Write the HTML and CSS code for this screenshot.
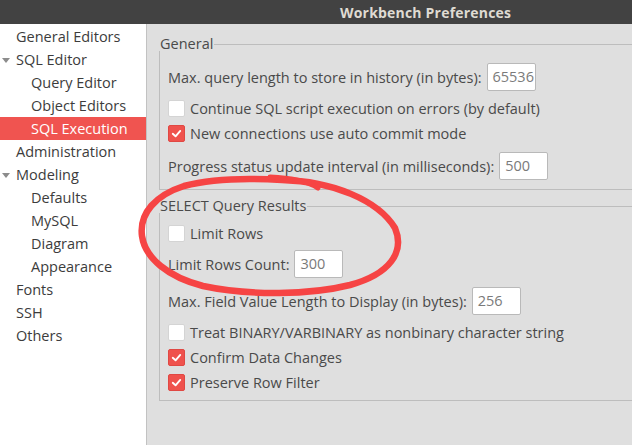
FILE: index.html
```html
<!DOCTYPE html>
<html>
<head>
<meta charset="utf-8">
<link rel="stylesheet" href="styles.css">
</head>
<body>
<div class="window">
  <header class="titlebar"><span class="title">Workbench Preferences</span></header>
  <div class="content">
    <nav class="sidebar">
      <div class="item l0">General Editors</div>
      <div class="item l0"><span class="tri"></span>SQL Editor</div>
      <div class="item l1">Query Editor</div>
      <div class="item l1">Object Editors</div>
      <div class="item l1 selected">SQL Execution</div>
      <div class="item l0">Administration</div>
      <div class="item l0"><span class="tri"></span>Modeling</div>
      <div class="item l1">Defaults</div>
      <div class="item l1">MySQL</div>
      <div class="item l1">Diagram</div>
      <div class="item l1">Appearance</div>
      <div class="item l0">Fonts</div>
      <div class="item l0">SSH</div>
      <div class="item l0">Others</div>
    </nav>
    <main class="panel">
      <section class="group group-general">
        <div class="group-head"><span class="group-label">General</span><span class="group-line"></span></div>
        <div class="group-body">
          <div class="row entry-row"><span>Max. query length to store in history (in bytes):</span><div class="entry">65536</div></div>
          <div class="row check-row"><span class="check"></span><span>Continue SQL script execution on errors (by default)</span></div>
          <div class="row check-row"><span class="check on"><svg viewBox="0 0 16 16"><polyline points="4,8.3 7,11 12,5.3"/></svg></span><span>New connections use auto commit mode</span></div>
          <div class="row entry-row gap-big"><span>Progress status update interval (in milliseconds):</span><div class="entry">500</div></div>
        </div>
      </section>
      <section class="group group-select">
        <div class="group-head"><span class="group-label">SELECT Query Results</span><span class="group-line"></span></div>
        <div class="group-body">
          <div class="row check-row"><span class="check"></span><span>Limit Rows</span></div>
          <div class="row entry-row"><span>Limit Rows Count:</span><div class="entry">300</div></div>
          <div class="row entry-row"><span>Max. Field Value Length to Display (in bytes):</span><div class="entry">256</div></div>
          <div class="row check-row"><span class="check"></span><span>Treat BINARY/VARBINARY as nonbinary character string</span></div>
          <div class="row check-row"><span class="check on"><svg viewBox="0 0 16 16"><polyline points="4,8.3 7,11 12,5.3"/></svg></span><span>Confirm Data Changes</span></div>
          <div class="row check-row"><span class="check on"><svg viewBox="0 0 16 16"><polyline points="4,8.3 7,11 12,5.3"/></svg></span><span>Preserve Row Filter</span></div>
        </div>
      </section>
    </main>
  </div>
  <svg class="scribble" viewBox="0 0 632 445" width="632" height="445">
    <path class="loop" d="M 282 180 C 332 181, 378 200, 395 228 C 405 252, 390 274, 350 285 C 310 295, 250 296, 203 286 C 168 277, 145 258, 142 236 C 139 213, 156 195, 184 186 C 214 178, 250 178, 282 180"/>
    <path class="hook" d="M 270 177 C 290 178, 305 180, 318 188"/>
  </svg>
</div>
</body>
</html>
```

FILE: styles.css
```css
html, body {
  margin: 0;
  padding: 0;
}
body {
  width: 632px;
  height: 445px;
  overflow: hidden;
  background: #dfdfdf;
  font-family: "Open Sans", "DejaVu Sans", sans-serif;
  font-size: 14.5px;
  color: #4a4a4a;
}
.window {
  position: relative;
  width: 632px;
  height: 445px;
  display: flex;
  flex-direction: column;
}
.titlebar {
  height: 24px;
  background: #424242;
  display: flex;
  align-items: center;
  padding-left: 340px;
  flex-shrink: 0;
}
.title {
  color: #dfdbd2;
  font-weight: bold;
  font-size: 14px;
  letter-spacing: 0.2px;
}
.content {
  flex: 1;
  display: flex;
  min-height: 0;
}
.sidebar {
  width: 146px;
  background: #ffffff;
  border-right: 1px solid #c2c2c2;
  padding-top: 1px;
  flex-shrink: 0;
}
.item {
  height: 23px;
  line-height: 23px;
  color: #3c3c3c;
  position: relative;
  white-space: nowrap;
}
.item.l0 { padding-left: 16px; }
.item.l1 { padding-left: 31px; }
.item.selected {
  background: #f05450;
  color: #ffffff;
}
.tri {
  position: absolute;
  left: 2px;
  top: 10px;
  width: 0;
  height: 0;
  border-left: 4px solid transparent;
  border-right: 4px solid transparent;
  border-top: 5px solid #8c8c8c;
}
.panel {
  flex: 1;
  padding-left: 12px;
  padding-top: 13px;
  overflow: hidden;
}
.group-head {
  display: flex;
  align-items: center;
  height: 14px;
}
.group-label {
  line-height: 14px;
  padding-left: 1px;
  white-space: nowrap;
}
.group-line {
  flex: 1;
  border-top: 1px solid #bdbdbd;
  margin-left: 1px;
}
.group-body {
  border-left: 1px solid #bdbdbd;
  border-bottom: 1px solid #bdbdbd;
  margin-top: 0;
  padding-left: 8px;
  display: flex;
  flex-direction: column;
  gap: 9px;
}
.group-general .group-body {
  padding-top: 12px;
  padding-bottom: 9px;
}
.group-select {
  margin-top: 9px;
}
.group-select .group-body {
  padding-top: 12px;
  padding-bottom: 10px;
}
.row {
  display: flex;
  align-items: center;
  white-space: nowrap;
}
.entry-row { height: 28px; }
.check-row { height: 16px; }
.gap-big { margin-top: 2px; }
.entry {
  margin-left: 5px;
  width: 37px;
  height: 26px;
  line-height: 26px;
  padding: 0 5px;
  background: #ffffff;
  border: 1px solid #b9b9b9;
  border-radius: 2px;
  color: #7a7a7a;
  overflow: hidden;
  flex-shrink: 0;
}
.check {
  width: 15px;
  height: 15px;
  background: #ffffff;
  border: 1px solid #d4d4d4;
  border-radius: 2px;
  margin-right: 5px;
  flex-shrink: 0;
  display: flex;
}
.check.on {
  background: #ef524d;
  border-color: #e04843;
}
.check svg {
  width: 15px;
  height: 15px;
}
.check polyline {
  fill: none;
  stroke: #ffffff;
  stroke-width: 2;
  stroke-linecap: round;
  stroke-linejoin: round;
}
.scribble {
  position: absolute;
  left: 0;
  top: 0;
  pointer-events: none;
}
.scribble path {
  fill: none;
  stroke: #f64444;
  stroke-linecap: round;
  stroke-linejoin: round;
}
.scribble .loop { stroke-width: 6.5; }
.scribble .hook { stroke-width: 5; }
```
